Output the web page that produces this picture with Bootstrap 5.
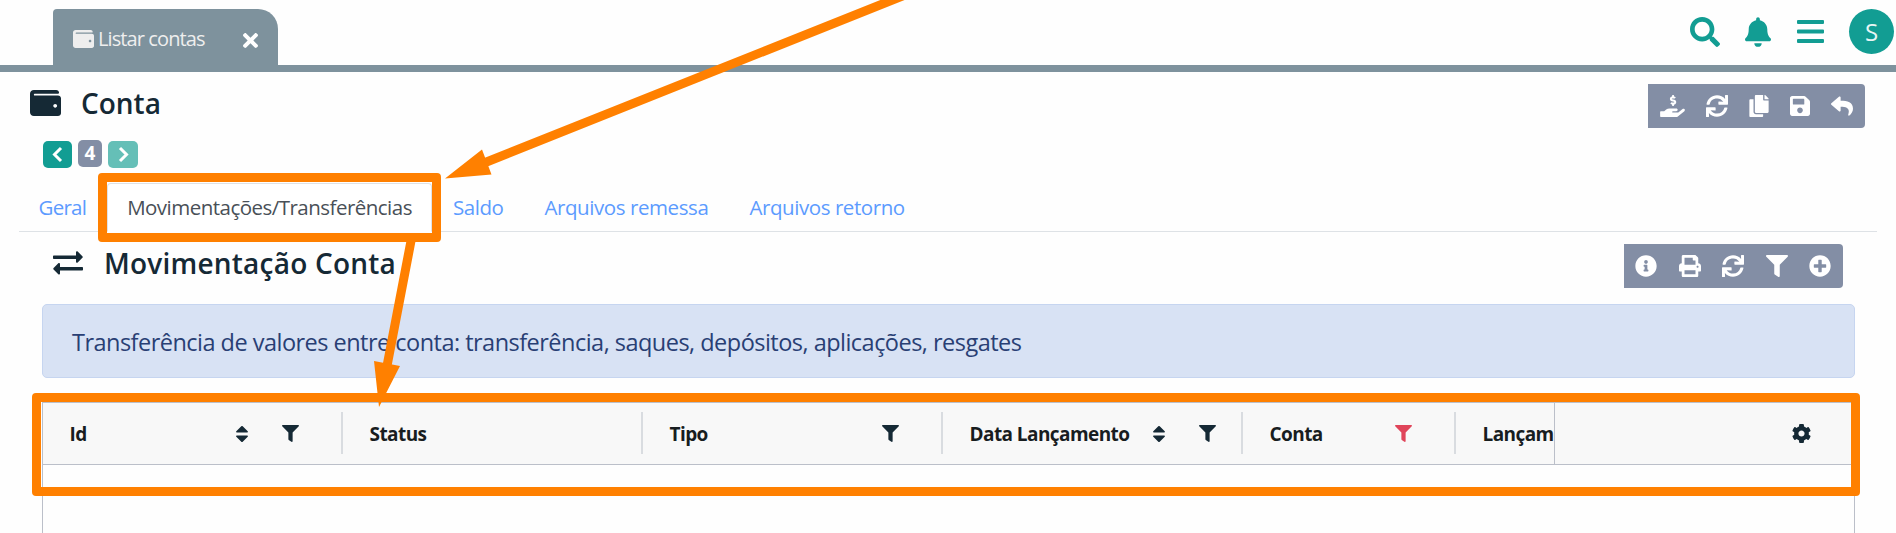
<!DOCTYPE html>
<html lang="pt-BR">
<head>
<meta charset="utf-8">
<meta name="viewport" content="width=device-width, initial-scale=1">
<title>Listar contas</title>
<link href="https://cdn.jsdelivr.net/npm/bootstrap@5.3.0/dist/css/bootstrap.min.css" rel="stylesheet">
<style>
:root{--ink:#152935;--teal:#129d93;--slate:#838ea5;--bar:#7e929d}
body{font-family:"Open Sans","Noto Sans",sans-serif;font-size:19px;line-height:1.5;color:var(--ink);background:#fefefe;width:1896px;height:533px;overflow:hidden;white-space:nowrap}
svg{display:block;flex:none;fill:currentColor}
.topbar{height:72px;border-bottom:7px solid var(--bar);padding-left:53px;padding-right:2px}
.page-tab{width:225px;height:56px;margin-top:9px;background:var(--bar);border-radius:4px 20px 0 0;color:#eee;padding:3px 20px 0}
.page-tab .lbl{font-size:20px;letter-spacing:-.9px;margin-left:4px}
.top-actions{color:var(--teal);height:63px}
.avatar{width:45px;height:45px;background:var(--teal);color:#e8f5f4;font-size:24px}
.title-row{height:56px;margin-top:12px;padding:0 31px 12px 30px}
h1,h2{font-size:28px;font-weight:600;margin:0;line-height:34px}
h2{letter-spacing:.22px}
.tools{height:44px;background:var(--slate);color:#fff;border-radius:0 4px 4px 0}
.pager{margin:0 0 0 43px;height:29px}
.pager .btn{height:27px;padding:0;border:0;border-radius:5px;color:#fff;background:var(--teal)}
.pager .badge{width:24px;height:27px;background:var(--slate);font-size:19px;line-height:27px;padding:0;border-radius:5px}
.nav-tabs{margin:14px 19px 0;height:49px;border-color:#dee2e6}
.nav-tabs .nav-link{height:49px;padding:10px 19.5px 0;line-height:27px;font-size:20.5px;letter-spacing:-.42px;color:#5c9bff;border-radius:4px 4px 0 0}
.nav-tabs .nav-item:first-child .nav-link{padding-left:18.5px;letter-spacing:-.75px}
.nav-tabs .nav-link.active{color:#495057;background:#fff;letter-spacing:-.52px}
.sub-row{height:56px;margin-top:12px;padding:0 53px 12px 53px}
.alert-info-box{height:74px;margin:4px 41px 0 42px;padding:3px 29px 0;border:1px solid #c6d5f0;border-radius:5px;background:#d8e2f4;color:#293f74;font-size:23.5px;letter-spacing:-.52px}
.grid-box{margin:24px 41px 0 42px;height:150px;border:1px solid #bbbfc9}
.grid-head{height:62px;background:#f8f8f8;border-bottom:1px solid #bbbfc9;font-size:19px;letter-spacing:-.57px;font-weight:700;color:#181d1f}
.cell{width:300px;padding-left:26.5px;padding-right:44px;position:relative;flex:none}
.cell span{padding-top:2px}
.cell:not(:last-child)::after{content:"";position:absolute;right:0;top:9px;width:2px;height:42px;background:#d9dce0}
.cell svg{color:var(--ink)}
.cell.narrow{width:213px}
.cell.tight{padding-right:27px}
.scroll-cols{width:1511px;overflow:hidden}
.pinned{border-left:1px solid #bbbfc9;flex:1;color:var(--ink);padding-right:43px}
.annot{position:absolute;left:0;top:0;pointer-events:none}
</style>
<script src="https://cdn.jsdelivr.net/npm/bootstrap@5.3.0/dist/js/bootstrap.bundle.min.js"></script>
</head>
<body>
<svg width="0" height="0" class="position-absolute">
<symbol id="wallet" viewBox="0 32 512 448" preserveAspectRatio="none"><path d="M461.2 128H80c-8.84 0-16-7.16-16-16s7.16-16 16-16h384c8.84 0 16-7.16 16-16 0-26.51-21.49-48-48-48H64C28.65 32 0 60.65 0 96v320c0 35.35 28.65 64 64 64h397.2c28.02 0 50.8-21.53 50.8-48V176c0-26.47-22.78-48-50.8-48zM416 336c-17.67 0-32-14.33-32-32s14.33-32 32-32 32 14.33 32 32-14.33 32-32 32z"/></symbol>
<symbol id="times" viewBox="0 80 352 352"><path d="M242.72 256l100.07-100.07c12.28-12.28 12.28-32.19 0-44.48l-22.24-22.24c-12.28-12.28-32.19-12.28-44.48 0L176 189.28 75.93 89.21c-12.28-12.28-32.19-12.28-44.48 0L9.21 111.45c-12.28 12.28-12.28 32.19 0 44.48L109.28 256 9.21 356.07c-12.28 12.28-12.28 32.19 0 44.48l22.24 22.24c12.28 12.28 32.2 12.28 44.48 0L176 322.72l100.07 100.07c12.28 12.28 32.2 12.28 44.48 0l22.24-22.24c12.28-12.28 12.28-32.19 0-44.48L242.72 256z"/></symbol>
<symbol id="search" viewBox="0 0 512 512"><path d="M505 442.7L405.3 343c-4.5-4.5-10.6-7-17-7H372c27.6-35.3 44-79.7 44-128C416 93.1 322.9 0 208 0S0 93.1 0 208s93.1 208 208 208c48.3 0 92.7-16.4 128-44v16.3c0 6.4 2.5 12.5 7 17l99.7 99.7c9.4 9.4 24.6 9.4 33.9 0l28.3-28.3c9.4-9.4 9.4-24.6.1-34zM208 336c-70.7 0-128-57.2-128-128 0-70.7 57.2-128 128-128 70.7 0 128 57.2 128 128 0 70.7-57.2 128-128 128z"/></symbol>
<symbol id="bell" viewBox="0 0 448 512"><path d="M224 512c35.32 0 63.97-28.65 63.97-64H160.03c0 35.35 28.65 64 63.97 64zm215.39-149.71c-19.32-20.76-55.47-51.99-55.47-154.29 0-77.7-54.48-139.9-127.94-155.16V32c0-17.67-14.32-32-31.98-32s-31.98 14.33-31.98 32v20.84C118.56 68.1 64.08 130.3 64.08 208c0 102.3-36.15 133.53-55.47 154.29-6 6.45-8.66 14.16-8.61 21.71.11 16.4 12.98 32 32.1 32h383.8c19.12 0 32-15.6 32.1-32 .05-7.55-2.61-15.27-8.61-21.71z"/></symbol>
<symbol id="bars" viewBox="0 0 27 23"><path d="M1 0h25a1 1 0 0 1 1 1v2a1 1 0 0 1-1 1H1a1 1 0 0 1-1-1V1a1 1 0 0 1 1-1zm0 9.500h25a1 1 0 0 1 1 1v2a1 1 0 0 1-1 1H1a1 1 0 0 1-1-1v-2a1 1 0 0 1 1-1zM1 19h25a1 1 0 0 1 1 1v2a1 1 0 0 1-1 1H1a1 1 0 0 1-1-1v-2a1 1 0 0 1 1-1z"/></symbol>
<symbol id="hand" viewBox="0 0 576 512"><path d="M271 144l50 14c4 1 6 5 6 8 0 5-4 9-8 9h-33c-4 0-7-1-10-2-5-3-11-2-15 2l-17 17c-5 5-5 14 2 18 9 6 20 10 31 12V240c0 9 7 16 16 16h16c9 0 16-7 16-16v-18c30-3 53-31 49-63-3-23-20-41-42-47l-50-14c-4-1-7-5-7-9 0-4 4-8 9-8h32c4 0 7 1 11 2 4 2 10 2 14-2l17-17c6-6 5-15-1-19-10-6-21-10-32-11V16c0-9-7-16-16-16h-16c-9 0-16 7-16 16v18c-30 3-53 31-49 63 3 23 20 41 43 47zM565 328c-12-11-30-10-43 0L430 402c-6 5-13 7-20 7H296c-9 0-16-7-16-16s7-16 16-16h78c16 0 31-11 34-27 3-20-12-37-32-37H216c-27 0-53 9-74 26l-47 38H16c-9 0-16 7-16 16v103c0 9 7 16 16 16h357c14 0 28-5 40-14l151-121c15-12 17-35 1-49z"/></symbol>
<symbol id="sync" viewBox="0 0 512 512"><path d="M440.65 12.57l4 82.77A247.16 247.16 0 0 0 255.83 8C134.73 8 33.91 94.92 12.29 209.82A12 12 0 0 0 24.09 224h49.05a12 12 0 0 0 11.67-9.26 175.91 175.91 0 0 1 317-56.94l-101.46-4.86a12 12 0 0 0-12.57 12v47.41a12 12 0 0 0 12 12H500a12 12 0 0 0 12-12V12a12 12 0 0 0-12-12h-47.37a12 12 0 0 0-11.98 12.57zM255.83 432a175.61 175.61 0 0 1-146-77.8l101.8 4.87a12 12 0 0 0 12.57-12v-47.4a12 12 0 0 0-12-12H12a12 12 0 0 0-12 12V500a12 12 0 0 0 12 12h47.35a12 12 0 0 0 12-12.6l-4.15-82.57A247.17 247.17 0 0 0 255.83 504c121.11 0 221.93-86.92 243.55-201.82a12 12 0 0 0-11.8-14.18h-49.05a12 12 0 0 0-11.67 9.26A175.86 175.86 0 0 1 255.83 432z"/></symbol>
<symbol id="copy" viewBox="0 0 448 512"><path d="M320 448v40c0 13.255-10.745 24-24 24H24c-13.255 0-24-10.745-24-24V120c0-13.255 10.745-24 24-24h72v296c0 30.879 25.121 56 56 56h168zm0-344V0H152c-13.255 0-24 10.745-24 24v368c0 13.255 10.745 24 24 24h272c13.255 0 24-10.745 24-24V128H344c-13.2 0-24-10.8-24-24zm120.971-31.029L375.029 7.029A24 24 0 0 0 358.059 0H352v96h96v-6.059a24 24 0 0 0-7.029-16.97z"/></symbol>
<symbol id="save" viewBox="0 32 448 448"><path d="M433.941 129.941l-83.882-83.882A48 48 0 0 0 316.118 32H48C21.49 32 0 53.49 0 80v352c0 26.51 21.49 48 48 48h352c26.51 0 48-21.49 48-48V163.882a48 48 0 0 0-14.059-33.941zM224 416c-35.346 0-64-28.654-64-64 0-35.346 28.654-64 64-64s64 28.654 64 64c0 35.346-28.654 64-64 64zm96-304.52V212c0 6.627-5.373 12-12 12H76c-6.627 0-12-5.373-12-12V108c0-6.627 5.373-12 12-12h228.52c3.183 0 6.235 1.264 8.485 3.515l3.480 3.480A11.996 11.996 0 0 1 320 111.480z"/></symbol>
<symbol id="reply" viewBox="0 0 512 512"><path d="M8.309 189.836L184.313 37.851C199.719 24.546 224 35.347 224 56.015v80.053c160.629 1.839 288 34.032 288 186.258 0 61.441-39.581 122.309-83.333 154.132-13.653 9.931-33.111-2.533-28.077-18.631 45.344-145.012-21.507-183.51-176.59-185.742V360c0 20.7-24.3 31.453-39.687 18.164l-176.004-152c-11.071-9.562-11.086-26.753 0-36.328z"/></symbol>
<symbol id="info" viewBox="0 0 512 512"><path d="M256 8C119.043 8 8 119.083 8 256c0 136.997 111.043 248 248 248s248-111.003 248-248C504 119.083 392.957 8 256 8zm0 110c23.196 0 42 18.804 42 42s-18.804 42-42 42-42-18.804-42-42 18.804-42 42-42zm56 254c0 6.627-5.373 12-12 12h-88c-6.627 0-12-5.373-12-12v-24c0-6.627 5.373-12 12-12h12v-64h-12c-6.627 0-12-5.373-12-12v-24c0-6.627 5.373-12 12-12h64c6.627 0 12 5.373 12 12v100h12c6.627 0 12 5.373 12 12v24z"/></symbol>
<symbol id="print" viewBox="0 0 512 512"><path d="M448 192V77.25c0-8.49-3.37-16.62-9.37-22.63L393.37 9.37c-6-6-14.14-9.37-22.63-9.37H96C78.33 0 64 14.33 64 32v160c-35.35 0-64 28.65-64 64v112c0 8.84 7.16 16 16 16h48v96c0 17.67 14.33 32 32 32h320c17.67 0 32-14.33 32-32v-96h48c8.84 0 16-7.16 16-16V256c0-35.35-28.65-64-64-64zm-64 256H128v-96h256v96zm0-224H128V64h192v48c0 8.84 7.16 16 16 16h48v96zm48 72c-13.25 0-24-10.75-24-24 0-13.26 10.75-24 24-24s24 10.74 24 24c0 13.25-10.75 24-24 24z"/></symbol>
<symbol id="filter" viewBox="0 0 512 512"><path d="M487.976 0H24.028C2.71 0-8.047 25.866 7.058 40.971L192 225.941V432c0 7.831 3.821 15.17 10.237 19.662l80 55.98C298.02 518.69 320 507.493 320 487.98V225.941l184.947-184.97C520.021 25.896 509.338 0 487.976 0z"/></symbol>
<symbol id="plus" viewBox="0 0 512 512"><path d="M256 8C119 8 8 119 8 256s111 248 248 248 248-111 248-248S393 8 256 8zm144 276c0 6.600-5.400 12-12 12h-92v92c0 6.600-5.400 12-12 12h-56c-6.600 0-12-5.400-12-12v-92h-92c-6.600 0-12-5.400-12-12v-56c0-6.600 5.400-12 12-12h92v-92c0-6.600 5.400-12 12-12h56c6.600 0 12 5.400 12 12v92h92c6.600 0 12 5.400 12 12v56z"/></symbol>
<symbol id="cog" viewBox="8 8 496 496"><path d="M487.400 315.700l-42.600-24.600c4.300-23.200 4.300-47 0-70.200l42.600-24.600c4.900-2.800 7.100-8.600 5.500-14-11.100-35.600-30-67.800-54.700-94.600-3.800-4.100-10-5.100-14.800-2.300L380.800 110c-17.900-15.400-38.500-27.300-60.800-35.100V25.800c0-5.600-3.900-10.500-9.400-11.700-36.700-8.200-74.300-7.800-109.200 0-5.500 1.200-9.400 6.100-9.400 11.700V75c-22.200 7.900-42.800 19.800-60.800 35.100L88.700 85.500c-4.900-2.800-11-1.900-14.800 2.300-24.700 26.700-43.600 58.900-54.700 94.600-1.700 5.400.6 11.200 5.500 14L67.300 221c-4.300 23.200-4.300 47 0 70.200l-42.600 24.600c-4.900 2.800-7.100 8.600-5.500 14 11.100 35.600 30 67.800 54.700 94.600 3.800 4.100 10 5.100 14.800 2.300l42.600-24.600c17.900 15.400 38.500 27.300 60.800 35.100v49.200c0 5.600 3.900 10.500 9.400 11.700 36.700 8.200 74.300 7.800 109.200 0 5.500-1.200 9.400-6.100 9.400-11.700v-49.200c22.200-7.900 42.800-19.800 60.800-35.100l42.600 24.600c4.900 2.800 11 1.900 14.800-2.300 24.700-26.700 43.600-58.900 54.700-94.600 1.500-5.500-.7-11.300-5.600-14.100zM256 336c-44.100 0-80-35.900-80-80s35.900-80 80-80 80 35.900 80 80-35.900 80-80 80z"/></symbol>
<symbol id="sort" viewBox="0 0 12 16"><path d="M5.300.3a1 1 0 0 1 1.400 0l5 5c.5.500.2 1.200-.5 1.200H.8C.1 6.500-.2 5.800.3 5.300zM5.300 15.700a1 1 0 0 0 1.400 0l5-5c.5-.5.2-1.200-.5-1.200H.8c-.7 0-1 .7-.5 1.200z"/></symbol>
<symbol id="exchange" viewBox="0 0 30 24"><path d="M1 4.500h22V1.300c0-1 1-1.400 1.700-.8l4.700 4.800c.5.500.5 1 0 1.500l-4.700 4.700c-.7.700-1.700.2-1.700-.7V8H1C.4 8 0 7.600 0 7V5.500c0-.6.400-1 1-1zM29 16H7v-3c0-1-1-1.400-1.700-.8L.6 17c-.5.500-.5 1 0 1.500l4.700 4.700c.7.700 1.700.2 1.700-.7v-3h22c.6 0 1-.4 1-1V17c0-.6-.4-1-1-1z"/></symbol>
</svg>

<header class="topbar d-flex justify-content-between">
  <div class="page-tab d-flex align-items-center">
    <svg width="21" height="18"><use href="#wallet"/></svg>
    <span class="lbl">Listar contas</span>
    <svg class="ms-auto mt-1 text-white" width="15" height="15"><use href="#times"/></svg>
  </div>
  <div class="top-actions d-flex align-items-center">
    <svg width="30" height="30" style="margin-right:25px"><use href="#search"/></svg>
    <svg width="26" height="30" style="margin-right:26px"><use href="#bell"/></svg>
    <svg width="27" height="23" style="margin-right:25px"><use href="#bars"/></svg>
    <div class="avatar rounded-circle d-flex align-items-center justify-content-center">S</div>
  </div>
</header>

<main>
  <div class="title-row d-flex justify-content-between">
    <div class="d-flex">
      <svg width="31" height="26" style="margin:6px 20px 0 0"><use href="#wallet"/></svg>
      <h1 style="margin-top:2px">Conta</h1>
    </div>
    <div class="tools d-flex align-items-center" style="width:217px;padding-left:12px">
      <svg width="25" height="22" style="margin-right:21px"><use href="#hand"/></svg>
      <svg width="22" height="22" style="margin-right:21px"><use href="#sync"/></svg>
      <svg width="20" height="22" style="margin-right:21px"><use href="#copy"/></svg>
      <svg width="20" height="20" style="margin-right:21px"><use href="#save"/></svg>
      <svg width="22" height="22"><use href="#reply"/></svg>
    </div>
  </div>

  <div class="pager d-flex">
    <button class="btn d-flex align-items-center justify-content-center" style="width:29px;margin:1px 6px 0 0"><svg width="11" height="17"><path d="M9 2 2.500 8.500 9 15" fill="none" stroke="#fff" stroke-width="3"/></svg></button>
    <span class="badge">4</span>
    <button class="btn d-flex align-items-center justify-content-center" style="width:30px;margin:1px 0 0 6px;background:#65bfb7"><svg width="11" height="17"><path d="M2 2 8.500 8.500 2 15" fill="none" stroke="#fff" stroke-width="3"/></svg></button>
  </div>

  <ul class="nav nav-tabs flex-nowrap">
    <li class="nav-item"><a class="nav-link" href="#">Geral</a></li>
    <li class="nav-item"><a class="nav-link active" href="#">Movimentações/Transferências</a></li>
    <li class="nav-item"><a class="nav-link" href="#">Saldo</a></li>
    <li class="nav-item"><a class="nav-link" href="#">Arquivos remessa</a></li>
    <li class="nav-item"><a class="nav-link" href="#">Arquivos retorno</a></li>
  </ul>

  <div class="sub-row d-flex justify-content-between">
    <div class="d-flex">
      <svg width="30" height="24" style="margin:7px 21px 0 0"><use href="#exchange"/></svg>
      <h2 style="margin-top:2px">Movimentação Conta</h2>
    </div>
    <div class="tools d-flex align-items-center" style="width:219px;padding-left:11px;gap:21.5px">
      <svg width="22" height="22"><use href="#info"/></svg>
      <svg width="22" height="22"><use href="#print"/></svg>
      <svg width="22" height="22"><use href="#sync"/></svg>
      <svg width="22" height="22"><use href="#filter"/></svg>
      <svg width="22" height="22"><use href="#plus"/></svg>
    </div>
  </div>

  <div class="alert-info-box d-flex align-items-center">Transferência de valores entre conta: transferência, saques, depósitos, aplicações, resgates</div>

  <div class="grid-box">
    <div class="grid-head d-flex">
      <div class="scroll-cols d-flex">
        <div class="cell d-flex align-items-center"><span>Id</span><svg class="ms-auto" width="12" height="16" style="margin-right:34px"><use href="#sort"/></svg><svg width="17" height="17"><use href="#filter"/></svg></div>
        <div class="cell d-flex align-items-center"><span>Status</span></div>
        <div class="cell d-flex align-items-center"><span>Tipo</span><svg class="ms-auto" width="17" height="17"><use href="#filter"/></svg></div>
        <div class="cell tight d-flex align-items-center"><span>Data Lançamento</span><svg class="ms-auto" width="12" height="16" style="margin-right:34px"><use href="#sort"/></svg><svg width="17" height="17"><use href="#filter"/></svg></div>
        <div class="cell narrow d-flex align-items-center"><span>Conta</span><svg class="ms-auto" width="17" height="17" style="color:#e0455a"><use href="#filter"/></svg></div>
        <div class="cell d-flex align-items-center"><span>Lançamento</span></div>
      </div>
      <div class="pinned d-flex align-items-center justify-content-end"><svg width="19" height="19"><use href="#cog"/></svg></div>
    </div>
  </div>
</main>

<svg class="annot" width="1896" height="533" viewBox="0 0 1896 533">
  <path fill="none" stroke="#ff8000" stroke-width="9" d="M910-7 484 163M411 241 387 366"/>
  <path fill="#ff8000" fill-rule="evenodd" d="M102 173H437a4 4 0 0 1 4 4V238a4 4 0 0 1-4 4H102a4 4 0 0 1-4-4V177a4 4 0 0 1 4-4zM107 182V233H432V182zM36 393H1856a4 4 0 0 1 4 4V492a4 4 0 0 1-4 4H36a4 4 0 0 1-4-4V397a4 4 0 0 1 4-4zM41 402V487H1851V402z"/>
  <path fill="#ff8000" d="M445 178.500 482 149.500 491.500 174.500zM379 407 374 361 400 366z"/>
</svg>
</body>
</html>
